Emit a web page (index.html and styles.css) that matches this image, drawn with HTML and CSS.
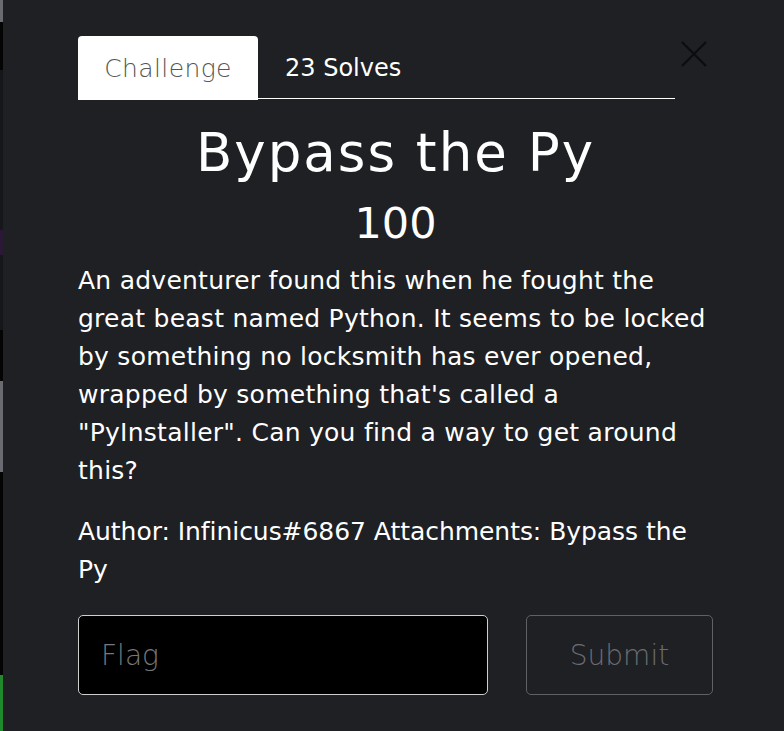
FILE: index.html
```html
<!DOCTYPE html>
<html lang="en">
<head>
<meta charset="utf-8">
<title>Bypass the Py</title>
<link rel="stylesheet" href="styles.css">
</head>
<body>
<div class="edge">
  <span class="seg seg-gray" style="height:22px"></span>
  <span class="seg seg-black" style="height:48px"></span>
  <span class="seg seg-dark" style="height:160px"></span>
  <span class="seg seg-purple" style="height:25px"></span>
  <span class="seg seg-dark" style="height:75px"></span>
  <span class="seg seg-black" style="height:51px"></span>
  <span class="seg seg-gray" style="height:91px"></span>
  <span class="seg seg-black" style="height:203px"></span>
  <span class="seg seg-green" style="height:56px"></span>
</div>
<main class="modal">
  <div class="head">
    <ul class="tabs">
      <li class="tab active">Challenge</li>
      <li class="tab">23 Solves</li>
    </ul>
    <button class="close" aria-label="Close">
      <svg width="26" height="26" viewBox="0 0 26 26"><path d="M1 1L25 25M25 1L1 25" stroke="#0c0d0f" stroke-width="2.2" fill="none"/></svg>
    </button>
  </div>
  <h1 class="title">Bypass the Py</h1>
  <h2 class="value">100</h2>
  <p class="desc">An adventurer found this when he fought the great beast named Python. It seems to be locked by something no locksmith has ever opened, wrapped by something that's called a "PyInstaller". Can you find a way to get around this?</p>
  <p class="meta">Author: Infinicus#6867 Attachments: Bypass the Py</p>
  <form class="submit-row">
    <input class="flag" type="text" placeholder="Flag">
    <button class="submit" type="button">Submit</button>
  </form>
</main>
</body>
</html>
```
FILE: styles.css
```css
html, body {
  margin: 0;
  padding: 0;
  height: 100%;
}
body {
  background: #1e2024;
  display: flex;
  overflow: hidden;
  font-family: "DejaVu Sans", sans-serif;
  color: #ffffff;
}
.edge {
  width: 3px;
  display: flex;
  flex-direction: column;
  flex: none;
}
.seg { display: block; flex: none; }
.seg-gray { background: #6a6b70; }
.seg-black { background: #040405; }
.seg-dark { background: #16171b; }
.seg-purple { background: #2a1836; }
.seg-green { background: #1f8a2b; }

.modal {
  width: 635px;
  padding: 36px 0 0 75px;
}
.head {
  display: flex;
  align-items: flex-start;
}
.tabs {
  flex: 1;
  list-style: none;
  margin: 0;
  padding: 0;
  display: flex;
  height: 62px;
  border-bottom: 1px solid #ffffff;
}
.tab {
  height: 64px;
  padding: 0 27px;
  display: flex;
  align-items: center;
  font-size: 24px;
  color: #ffffff;
  border-radius: 4px 4px 0 0;
}
.tab.active {
  width: 180px;
  box-sizing: border-box;
  padding: 0;
  justify-content: center;
  background: #ffffff;
  color: #555555;
  font-size: 25px;
  letter-spacing: 0.4px;
  font-weight: 300;
}
.close {
  width: 38px;
  height: 36px;
  padding: 0;
  margin: 0;
  border: 0;
  background: none;
  display: flex;
  justify-content: center;
  align-items: center;
}
.title {
  margin: 18px 0 0;
  text-align: center;
  font-weight: 400;
  font-size: 53px;
  letter-spacing: 2px;
  line-height: 72px;
}
.value {
  margin: 4px 0 0;
  text-align: center;
  font-weight: 400;
  font-size: 43px;
  line-height: 60px;
}
.desc, .meta {
  margin: 0;
  font-size: 25px;
  letter-spacing: 0.25px;
  line-height: 38px;
}
.desc {
  margin-top: 9px;
}
.meta {
  margin-top: 23px;
  letter-spacing: -0.05px;
}
.submit-row {
  display: flex;
  gap: 38px;
  margin-top: 26px;
}
.flag {
  width: 410px;
  height: 80px;
  box-sizing: border-box;
  background: #000000;
  border: 1px solid #cfcfcf;
  border-radius: 5px;
  padding: 0 22px;
  font-family: "DejaVu Sans", sans-serif;
  font-weight: 300;
  font-size: 28px;
  color: #ffffff;
}
.flag::placeholder { color: #77787b; }
.submit {
  width: 187px;
  height: 80px;
  box-sizing: border-box;
  background: transparent;
  border: 1px solid #606165;
  border-radius: 5px;
  font-family: "DejaVu Sans", sans-serif;
  font-weight: 300;
  font-size: 28px;
  color: #6b6c70;
}
```
